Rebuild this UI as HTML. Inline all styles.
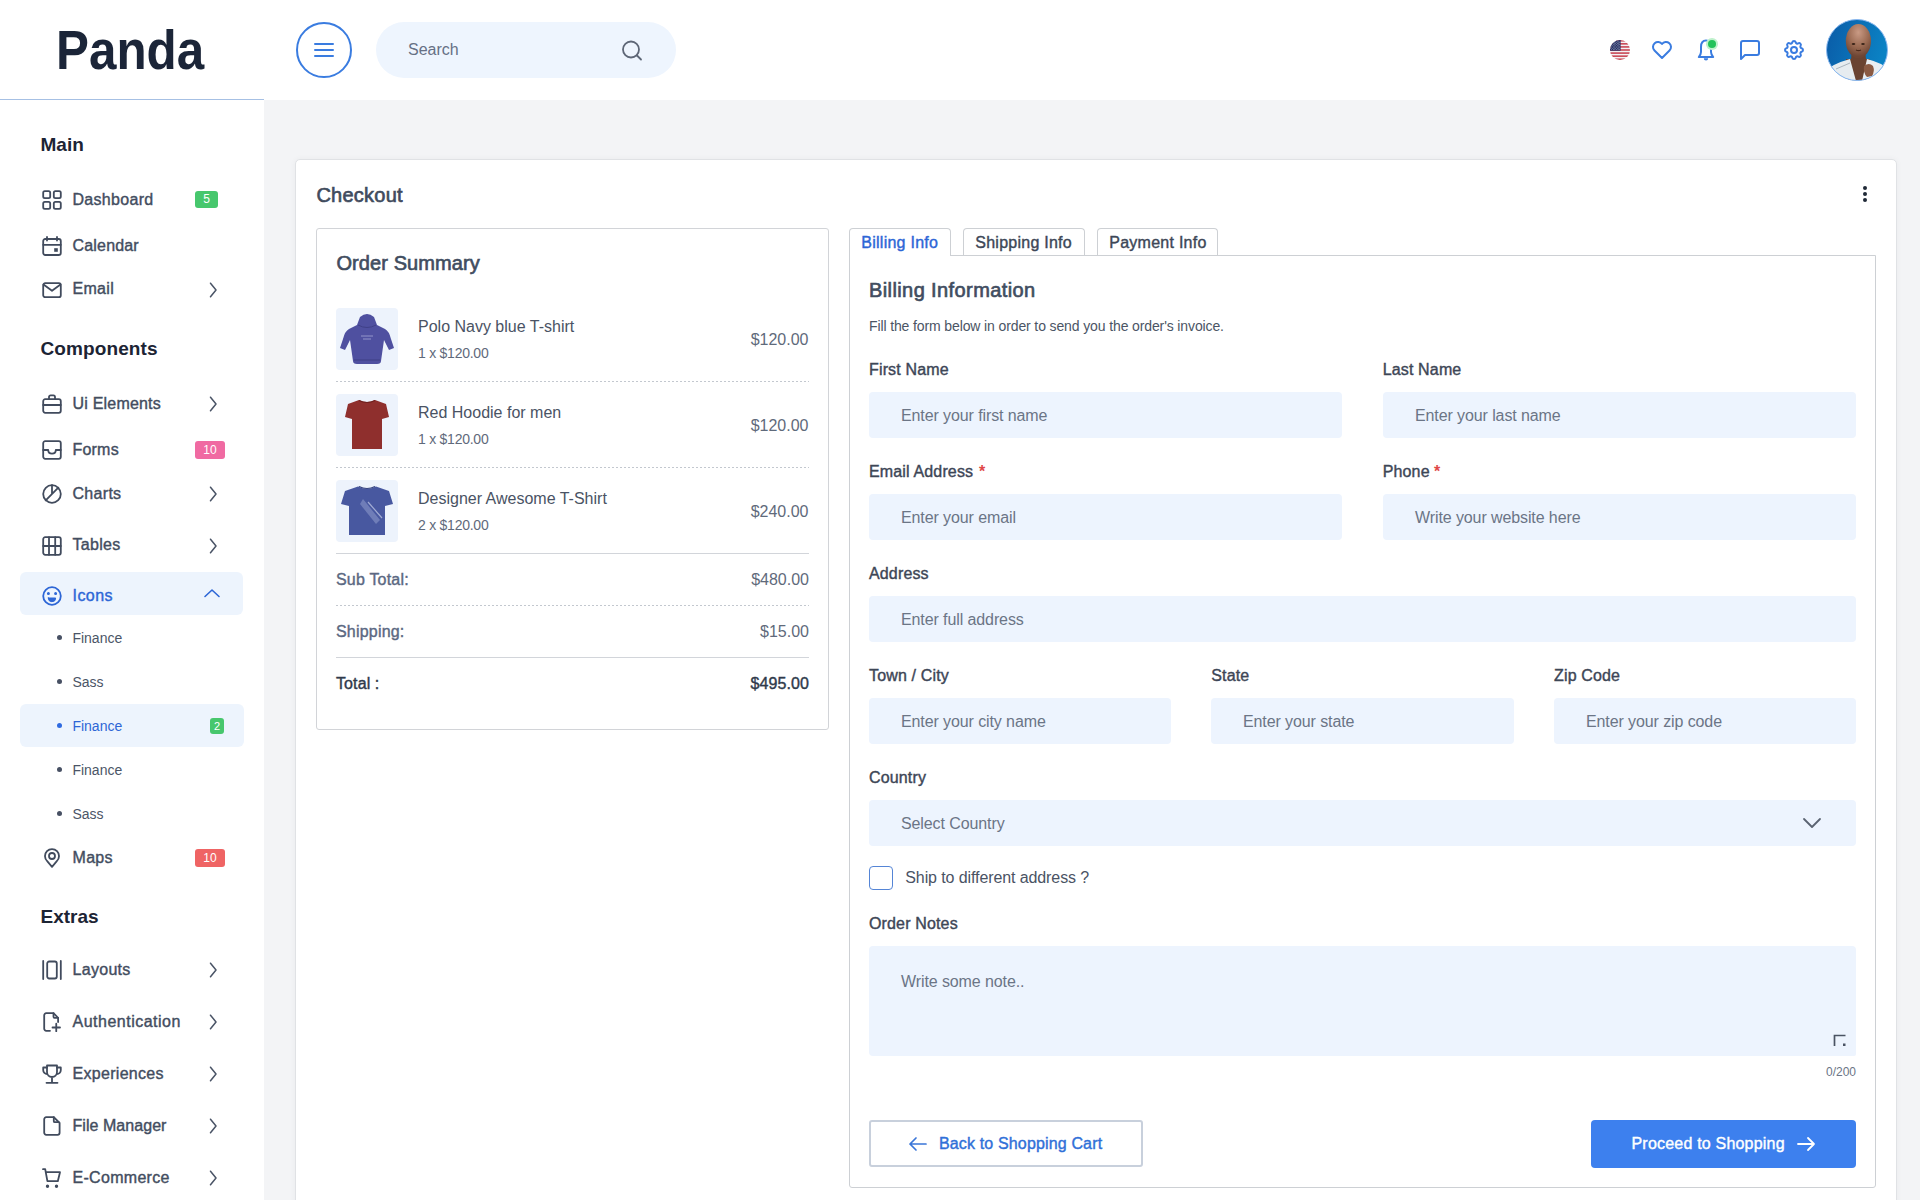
<!DOCTYPE html>
<html><head><meta charset="utf-8"><title>Checkout</title>
<style>
html,body{margin:0;padding:0;}
body{width:1920px;height:1200px;position:relative;overflow:hidden;background:#f3f4f6;font-family:"Liberation Sans",sans-serif;}
.t{position:absolute;white-space:nowrap;}
</style></head><body>

<div style="position:absolute;left:0px;top:0px;width:1920px;height:100px;background:#ffffff;"></div>
<div style="position:absolute;left:0px;top:99px;width:264px;height:1px;background:#a6c0e4;"></div>
<div class="t" style="left:55.6px;top:22.00px;font-size:56px;line-height:56px;font-weight:700;color:#1b2538;transform:scaleX(0.882);transform-origin:left top;">Panda</div>
<div style="position:absolute;left:296px;top:22px;width:56px;height:56px;box-sizing:border-box;border:2px solid #3a7ce0;border-radius:50%;"></div>
<svg style="position:absolute;left:314px;top:41px;" width="20" height="18" viewBox="0 0 20 18" fill="none"><path d="M1 3h18M1 9h18M1 15h18" stroke="#3a7ce0" stroke-width="2" stroke-linecap="round"/></svg>
<div style="position:absolute;left:376px;top:22px;width:300px;height:56px;background:#eef5fe;border-radius:28px;"></div>
<div class="t" style="left:408px;top:42.00px;font-size:16px;line-height:16px;font-weight:400;color:#667085;">Search</div>
<svg style="position:absolute;left:619px;top:38px;" width="26" height="26" viewBox="0 0 26 26" fill="none"><circle cx="12" cy="11.5" r="8" stroke="#5d6676" stroke-width="1.8"/><path d="M18 17.5l4 4" stroke="#5d6676" stroke-width="1.8" stroke-linecap="round"/></svg>
<div style="position:absolute;left:0px;top:100px;width:264px;height:1100px;background:#ffffff;"></div>
<svg style="position:absolute;left:1610px;top:40px" width="20" height="20" viewBox="0 0 20 20">
<defs><clipPath id="fc"><circle cx="10" cy="10" r="10"/></clipPath></defs>
<g clip-path="url(#fc)">
<rect width="20" height="20" fill="#f2f2f4"/>
<rect y="0.000" width="20" height="1.538" fill="#c8404e"/><rect y="3.077" width="20" height="1.538" fill="#c8404e"/><rect y="6.154" width="20" height="1.538" fill="#c8404e"/><rect y="9.231" width="20" height="1.538" fill="#c8404e"/><rect y="12.308" width="20" height="1.538" fill="#c8404e"/><rect y="15.385" width="20" height="1.538" fill="#c8404e"/><rect y="18.462" width="20" height="1.538" fill="#c8404e"/>
<rect width="10.6" height="10.7" fill="#232d62"/>
<g fill="#e8eaf2"><circle cx="0.90" cy="1.00" r=".38"/><circle cx="2.50" cy="1.00" r=".38"/><circle cx="4.10" cy="1.00" r=".38"/><circle cx="5.70" cy="1.00" r=".38"/><circle cx="7.30" cy="1.00" r=".38"/><circle cx="8.90" cy="1.00" r=".38"/><circle cx="1.70" cy="2.20" r=".38"/><circle cx="3.30" cy="2.20" r=".38"/><circle cx="4.90" cy="2.20" r=".38"/><circle cx="6.50" cy="2.20" r=".38"/><circle cx="8.10" cy="2.20" r=".38"/><circle cx="9.70" cy="2.20" r=".38"/><circle cx="0.90" cy="3.40" r=".38"/><circle cx="2.50" cy="3.40" r=".38"/><circle cx="4.10" cy="3.40" r=".38"/><circle cx="5.70" cy="3.40" r=".38"/><circle cx="7.30" cy="3.40" r=".38"/><circle cx="8.90" cy="3.40" r=".38"/><circle cx="1.70" cy="4.60" r=".38"/><circle cx="3.30" cy="4.60" r=".38"/><circle cx="4.90" cy="4.60" r=".38"/><circle cx="6.50" cy="4.60" r=".38"/><circle cx="8.10" cy="4.60" r=".38"/><circle cx="9.70" cy="4.60" r=".38"/><circle cx="0.90" cy="5.80" r=".38"/><circle cx="2.50" cy="5.80" r=".38"/><circle cx="4.10" cy="5.80" r=".38"/><circle cx="5.70" cy="5.80" r=".38"/><circle cx="7.30" cy="5.80" r=".38"/><circle cx="8.90" cy="5.80" r=".38"/><circle cx="1.70" cy="7.00" r=".38"/><circle cx="3.30" cy="7.00" r=".38"/><circle cx="4.90" cy="7.00" r=".38"/><circle cx="6.50" cy="7.00" r=".38"/><circle cx="8.10" cy="7.00" r=".38"/><circle cx="9.70" cy="7.00" r=".38"/><circle cx="0.90" cy="8.20" r=".38"/><circle cx="2.50" cy="8.20" r=".38"/><circle cx="4.10" cy="8.20" r=".38"/><circle cx="5.70" cy="8.20" r=".38"/><circle cx="7.30" cy="8.20" r=".38"/><circle cx="8.90" cy="8.20" r=".38"/><circle cx="1.70" cy="9.40" r=".38"/><circle cx="3.30" cy="9.40" r=".38"/><circle cx="4.90" cy="9.40" r=".38"/><circle cx="6.50" cy="9.40" r=".38"/><circle cx="8.10" cy="9.40" r=".38"/><circle cx="9.70" cy="9.40" r=".38"/></g>
</g></svg>
<svg style="position:absolute;left:1650px;top:38px;" width="24" height="24" viewBox="0 0 24 24" fill="none"><path d="M19.5 12.572L12 20l-7.5-7.428A5 5 0 1 1 12 6.006a5 5 0 1 1 7.5 6.572" stroke="#3a7ce0" stroke-width="2" stroke-linecap="round" stroke-linejoin="round"/></svg>
<svg style="position:absolute;left:1696px;top:38px" width="20" height="24" viewBox="0 0 20 24" fill="none"><path d="M10 2.5C6.6 2.5 5 5.2 5 9v5q0 2.2-2.2 5h14.4q-2.2-2.8-2.2-5V9c0-3.8-1.6-6.5-5-6.5z" stroke="#3a7ce0" stroke-width="2" stroke-linejoin="round"/><path d="M7.8 20.2a2.2 2.2 0 0 0 4.4 0z" fill="#3a7ce0"/></svg>
<div style="position:absolute;left:1706.2px;top:38.2px;width:11.5px;height:11.5px;background:#bff1cc;border-radius:50%;"></div>
<div style="position:absolute;left:1708px;top:40px;width:8px;height:8px;background:#22c25a;border-radius:50%;"></div>
<svg style="position:absolute;left:1738px;top:38px;" width="24" height="24" viewBox="0 0 24 24" fill="none"><path d="M3 21V5a2 2 0 0 1 2-2h14a2 2 0 0 1 2 2v10a2 2 0 0 1-2 2H7l-4 4z" stroke="#3a7ce0" stroke-width="2" stroke-linecap="round" stroke-linejoin="round"/></svg>
<svg style="position:absolute;left:1782px;top:38px;" width="24" height="24" viewBox="0 0 24 24" fill="none"><path d="M10.325 4.317c.426-1.756 2.924-1.756 3.35 0a1.724 1.724 0 0 0 2.573 1.066c1.543-.94 3.31.826 2.37 2.37a1.724 1.724 0 0 0 1.065 2.572c1.756.426 1.756 2.924 0 3.35a1.724 1.724 0 0 0-1.066 2.573c.94 1.543-.826 3.31-2.37 2.37a1.724 1.724 0 0 0-2.572 1.065c-.426 1.756-2.924 1.756-3.35 0a1.724 1.724 0 0 0-2.573-1.066c-1.543.94-3.31-.826-2.37-2.37a1.724 1.724 0 0 0-1.065-2.572c-1.756-.426-1.756-2.924 0-3.35a1.724 1.724 0 0 0 1.066-2.573c-.94-1.543.826-3.31 2.37-2.37c1 .608 2.296.07 2.572-1.065z" stroke="#3a7ce0" stroke-width="2" stroke-linecap="round" stroke-linejoin="round"/><circle cx="12" cy="12" r="3" stroke="#3a7ce0" stroke-width="2"/></svg>
<svg style="position:absolute;left:1826px;top:19px" width="62" height="62" viewBox="0 0 62 62">
<defs><clipPath id="ac"><circle cx="31" cy="31" r="30.5"/></clipPath>
<linearGradient id="abg" x1="0" y1="0" x2="1" y2="0.3"><stop offset="0" stop-color="#0a5aa6"/><stop offset="1" stop-color="#0b82c4"/></linearGradient>
<radialGradient id="skin" cx="0.5" cy="0.25" r="0.7"><stop offset="0" stop-color="#c99a84"/><stop offset="0.6" stop-color="#9a6a52"/><stop offset="1" stop-color="#6e4634"/></radialGradient></defs>
<g clip-path="url(#ac)">
<rect width="62" height="62" fill="url(#abg)"/>
<path d="M26 32 L39 32 L40 40 L44 40 L42 62 L22 62 L20 40 L25 40 Z" fill="#6a4331"/>
<path d="M0 62 L0 52 Q6 45 24 40 L30 62 Z" fill="#e6ecf0"/>
<path d="M62 62 L62 50 Q56 44 41 40 L36 62 Z" fill="#e9eef2"/>
<path d="M10 50 L24 44" stroke="#9aa6b0" stroke-width="0.8"/>
<ellipse cx="32.4" cy="22" rx="12.6" ry="17" fill="url(#skin)"/>
<path d="M38 47 q5 -4 9 0 q2 5 -1 10 l-5 1 q-4 -4 -3 -11z" fill="#8a5a43"/>
<ellipse cx="27.5" cy="25" rx="1.8" ry="0.9" fill="#3a2418"/><ellipse cx="37" cy="25" rx="1.8" ry="0.9" fill="#3a2418"/>
<path d="M30 31 q2.5 1.2 5 0" stroke="#4a2a1c" stroke-width="1.2" fill="none"/>
</g>
<circle cx="31" cy="31" r="30.5" fill="none" stroke="#8ab8f0" stroke-width="1"/>
</svg>
<div class="t" style="left:40.5px;top:135.00px;font-size:19px;line-height:19px;font-weight:700;color:#1c2434;">Main</div>
<div class="t" style="left:40.5px;top:339.00px;font-size:19px;line-height:19px;font-weight:700;color:#1c2434;letter-spacing:0.1px;">Components</div>
<div class="t" style="left:40.5px;top:907.00px;font-size:19px;line-height:19px;font-weight:700;color:#1c2434;">Extras</div>
<svg style="position:absolute;left:42px;top:190px" width="20" height="20" viewBox="0 0 20 20" fill="none" stroke="#414b5d" stroke-width="1.8" stroke-linecap="round" stroke-linejoin="round"><rect x="1.2" y="1.2" width="7" height="7" rx="1.6"/><rect x="11.8" y="1.2" width="7" height="7" rx="1.6"/><rect x="1.2" y="11.8" width="7" height="7" rx="1.6"/><rect x="11.8" y="11.8" width="7" height="7" rx="1.6"/></svg>
<div class="t" style="left:72.5px;top:192.00px;font-size:16px;line-height:16px;font-weight:400;color:#434d60;letter-spacing:0.3px;-webkit-text-stroke:0.4px #434d60;">Dashboard</div>
<div style="position:absolute;left:195px;top:191px;width:23px;height:17px;background:#47c76d;border-radius:3px;color:#fff;font-size:12px;line-height:17px;text-align:center;">5</div>
<svg style="position:absolute;left:42px;top:236px" width="20" height="20" viewBox="0 0 20 20" fill="none" stroke="#414b5d" stroke-width="1.8" stroke-linecap="round" stroke-linejoin="round"><rect x="1.2" y="3" width="17.6" height="16" rx="2"/><path d="M1.2 8.8h17.6M5 1v3.5M15 1v3.5"/><rect x="12.2" y="12.2" width="3.6" height="3.6" fill="#414b5d" stroke="none"/></svg>
<div class="t" style="left:72.5px;top:238.00px;font-size:16px;line-height:16px;font-weight:400;color:#434d60;letter-spacing:0.18px;-webkit-text-stroke:0.4px #434d60;">Calendar</div>
<svg style="position:absolute;left:42px;top:280px" width="20" height="20" viewBox="0 0 20 20" fill="none" stroke="#414b5d" stroke-width="1.8" stroke-linecap="round" stroke-linejoin="round"><rect x="1.2" y="3.2" width="17.6" height="14" rx="2"/><path d="M1.5 4.5l8.5 6.3 8.5-6.3"/></svg>
<div class="t" style="left:72.5px;top:281.00px;font-size:16px;line-height:16px;font-weight:400;color:#434d60;letter-spacing:0.3px;-webkit-text-stroke:0.4px #434d60;">Email</div>
<svg style="position:absolute;left:209px;top:282px" width="10" height="16" viewBox="0 0 10 16" fill="none"><path d="M1.5 1.2l5.5 6.8-5.5 6.8" stroke="#4a5466" stroke-width="1.5" stroke-linecap="round" stroke-linejoin="round"/></svg>
<svg style="position:absolute;left:42px;top:394px" width="20" height="20" viewBox="0 0 20 20" fill="none" stroke="#414b5d" stroke-width="1.8" stroke-linecap="round" stroke-linejoin="round"><rect x="1.2" y="5.2" width="17.6" height="13.6" rx="2"/><path d="M7 5.2V3a1.6 1.6 0 0 1 1.6-1.6h2.8A1.6 1.6 0 0 1 13 3v2.2M1.2 11h17.6"/></svg>
<div class="t" style="left:72.5px;top:396.00px;font-size:16px;line-height:16px;font-weight:400;color:#434d60;letter-spacing:0.2px;-webkit-text-stroke:0.4px #434d60;">Ui Elements</div>
<svg style="position:absolute;left:209px;top:396px" width="10" height="16" viewBox="0 0 10 16" fill="none"><path d="M1.5 1.2l5.5 6.8-5.5 6.8" stroke="#4a5466" stroke-width="1.5" stroke-linecap="round" stroke-linejoin="round"/></svg>
<svg style="position:absolute;left:42px;top:440px" width="20" height="20" viewBox="0 0 20 20" fill="none" stroke="#414b5d" stroke-width="1.8" stroke-linecap="round" stroke-linejoin="round"><rect x="1.2" y="1.2" width="17.6" height="17.6" rx="2"/><path d="M1.2 10h5c0 2.5 1.2 3.6 3.8 3.6s3.8-1.1 3.8-3.6h5"/></svg>
<div class="t" style="left:72.5px;top:442.00px;font-size:16px;line-height:16px;font-weight:400;color:#434d60;letter-spacing:0.2px;-webkit-text-stroke:0.4px #434d60;">Forms</div>
<div style="position:absolute;left:195px;top:441px;width:30px;height:18px;background:#f06aa2;border-radius:3px;color:#fff;font-size:12px;line-height:18px;text-align:center;">10</div>
<svg style="position:absolute;left:42px;top:484px" width="20" height="20" viewBox="0 0 20 20" fill="none" stroke="#414b5d" stroke-width="1.8" stroke-linecap="round" stroke-linejoin="round"><circle cx="10" cy="10" r="8.8"/><path d="M10 1.2V10M16.3 3.7L3.7 16.3"/></svg>
<div class="t" style="left:72.5px;top:486.00px;font-size:16px;line-height:16px;font-weight:400;color:#434d60;letter-spacing:0.3px;-webkit-text-stroke:0.4px #434d60;">Charts</div>
<svg style="position:absolute;left:209px;top:486px" width="10" height="16" viewBox="0 0 10 16" fill="none"><path d="M1.5 1.2l5.5 6.8-5.5 6.8" stroke="#4a5466" stroke-width="1.5" stroke-linecap="round" stroke-linejoin="round"/></svg>
<svg style="position:absolute;left:209px;top:537.5px" width="10" height="16" viewBox="0 0 10 16" fill="none"><path d="M1.5 1.2l5.5 6.8-5.5 6.8" stroke="#4a5466" stroke-width="1.5" stroke-linecap="round" stroke-linejoin="round"/></svg>
<svg style="position:absolute;left:42px;top:535.5px" width="20" height="20" viewBox="0 0 20 20" fill="none" stroke="#414b5d" stroke-width="1.8" stroke-linecap="round" stroke-linejoin="round"><rect x="1.2" y="1.2" width="17.6" height="17.6" rx="2"/><path d="M7 1.2v17.6M13.2 1.2v17.6M1.2 10h17.6"/></svg>
<div class="t" style="left:72.5px;top:537.00px;font-size:16px;line-height:16px;font-weight:400;color:#434d60;letter-spacing:0.3px;-webkit-text-stroke:0.4px #434d60;">Tables</div>
<div style="position:absolute;left:20px;top:572px;width:223px;height:43px;background:#edf4fd;border-radius:6px;"></div>
<svg style="position:absolute;left:42px;top:586px" width="20" height="20" viewBox="0 0 20 20" fill="none" stroke="#2d66d6" stroke-width="1.8" stroke-linecap="round" stroke-linejoin="round"><circle cx="10" cy="10" r="8.8"/><circle cx="6.4" cy="7.4" r="0.6" fill="#2d66d6"/><circle cx="13.6" cy="7.4" r="0.6" fill="#2d66d6"/><path d="M6.3 12h7.4a3.7 3.7 0 0 1-7.4 0z" fill="#2d66d6" stroke-width="1"/></svg>
<div class="t" style="left:72.5px;top:588.00px;font-size:16px;line-height:16px;font-weight:400;color:#2d66d6;letter-spacing:0.45px;-webkit-text-stroke:0.4px #2d66d6;">Icons</div>
<svg style="position:absolute;left:203px;top:587px" width="18" height="12" viewBox="0 0 18 12" fill="none"><path d="M2 9.5l7-6.5 7 6.5" stroke="#2d66d6" stroke-width="1.6" stroke-linecap="round" stroke-linejoin="round"/></svg>
<div style="position:absolute;left:57.3px;top:635.0px;width:5px;height:5px;background:#475063;border-radius:50%;"></div>
<div class="t" style="left:72.4px;top:631.00px;font-size:14px;line-height:14px;font-weight:400;color:#4b5567;">Finance</div>
<div style="position:absolute;left:57.3px;top:678.7px;width:5px;height:5px;background:#475063;border-radius:50%;"></div>
<div class="t" style="left:72.4px;top:675.00px;font-size:14px;line-height:14px;font-weight:400;color:#4b5567;">Sass</div>
<div style="position:absolute;left:20px;top:704px;width:224px;height:43px;background:#edf4fd;border-radius:6px;"></div>
<div style="position:absolute;left:57.3px;top:722.7px;width:5px;height:5px;background:#2f6ae0;border-radius:50%;"></div>
<div class="t" style="left:72.4px;top:719.00px;font-size:14px;line-height:14px;font-weight:400;color:#2d66d6;">Finance</div>
<div style="position:absolute;left:210px;top:718px;width:14px;height:16px;background:#47c76d;border-radius:3px;color:#fff;font-size:11px;line-height:16px;text-align:center;">2</div>
<div style="position:absolute;left:57.3px;top:766.7px;width:5px;height:5px;background:#475063;border-radius:50%;"></div>
<div class="t" style="left:72.4px;top:763.00px;font-size:14px;line-height:14px;font-weight:400;color:#4b5567;">Finance</div>
<div style="position:absolute;left:57.3px;top:810.7px;width:5px;height:5px;background:#475063;border-radius:50%;"></div>
<div class="t" style="left:72.4px;top:807.00px;font-size:14px;line-height:14px;font-weight:400;color:#4b5567;">Sass</div>
<svg style="position:absolute;left:42px;top:847.5px" width="20" height="20" viewBox="0 0 20 20" fill="none" stroke="#414b5d" stroke-width="1.8" stroke-linecap="round" stroke-linejoin="round"><circle cx="10" cy="8" r="3"/><path d="M14.8 13.2L10 18.8l-4.8-5.6a7 7 0 1 1 9.6 0z"/></svg>
<div class="t" style="left:72.5px;top:850.00px;font-size:16px;line-height:16px;font-weight:400;color:#434d60;letter-spacing:0.3px;-webkit-text-stroke:0.4px #434d60;">Maps</div>
<div style="position:absolute;left:195px;top:849px;width:30px;height:18px;background:#ef6464;border-radius:3px;color:#fff;font-size:12px;line-height:18px;text-align:center;">10</div>
<svg style="position:absolute;left:42px;top:960px" width="20" height="20" viewBox="0 0 20 20" fill="none" stroke="#414b5d" stroke-width="1.8" stroke-linecap="round" stroke-linejoin="round"><path d="M1.2 1v18M18.8 1v18"/><rect x="5.2" y="1.5" width="9.6" height="17" rx="2"/></svg>
<div class="t" style="left:72.5px;top:962.00px;font-size:16px;line-height:16px;font-weight:400;color:#434d60;letter-spacing:0.3px;-webkit-text-stroke:0.4px #434d60;">Layouts</div>
<svg style="position:absolute;left:209px;top:962px" width="10" height="16" viewBox="0 0 10 16" fill="none"><path d="M1.5 1.2l5.5 6.8-5.5 6.8" stroke="#4a5466" stroke-width="1.5" stroke-linecap="round" stroke-linejoin="round"/></svg>
<svg style="position:absolute;left:42px;top:1012px" width="20" height="20" viewBox="0 0 20 20" fill="none" stroke="#414b5d" stroke-width="1.8" stroke-linecap="round" stroke-linejoin="round"><path d="M11.5 1.2v3.6a1 1 0 0 0 1 1h3.6"/><path d="M8 18.8H4.2a2 2 0 0 1-2-2V3.2a2 2 0 0 1 2-2h7.3l4.6 4.6V10"/><path d="M10.5 15.5h7.5M14.25 11.75v7.5"/></svg>
<div class="t" style="left:72.5px;top:1014.00px;font-size:16px;line-height:16px;font-weight:400;color:#434d60;letter-spacing:0.5px;-webkit-text-stroke:0.4px #434d60;">Authentication</div>
<svg style="position:absolute;left:209px;top:1014px" width="10" height="16" viewBox="0 0 10 16" fill="none"><path d="M1.5 1.2l5.5 6.8-5.5 6.8" stroke="#4a5466" stroke-width="1.5" stroke-linecap="round" stroke-linejoin="round"/></svg>
<svg style="position:absolute;left:42px;top:1064px" width="20" height="20" viewBox="0 0 20 20" fill="none" stroke="#414b5d" stroke-width="1.8" stroke-linecap="round" stroke-linejoin="round"><path d="M4.5 18.8h11M10 13.5v5.3M5 1.5h10M15 1.5v6.5a5 5 0 0 1-10 0V1.5"/><path d="M5 3.5H1.2v2.5a4 4 0 0 0 4 4M15 3.5h3.8v2.5a4 4 0 0 1-4 4"/></svg>
<div class="t" style="left:72.5px;top:1066.00px;font-size:16px;line-height:16px;font-weight:400;color:#434d60;letter-spacing:0.3px;-webkit-text-stroke:0.4px #434d60;">Experiences</div>
<svg style="position:absolute;left:209px;top:1066px" width="10" height="16" viewBox="0 0 10 16" fill="none"><path d="M1.5 1.2l5.5 6.8-5.5 6.8" stroke="#4a5466" stroke-width="1.5" stroke-linecap="round" stroke-linejoin="round"/></svg>
<svg style="position:absolute;left:42px;top:1116px" width="20" height="20" viewBox="0 0 20 20" fill="none" stroke="#414b5d" stroke-width="1.8" stroke-linecap="round" stroke-linejoin="round"><path d="M11.8 1.2v4a1 1 0 0 0 1 1h4"/><path d="M15.8 18.8H4.2a2 2 0 0 1-2-2V3.2a2 2 0 0 1 2-2h7.6l5.8 5.8v9.8a2 2 0 0 1-2 2z"/></svg>
<div class="t" style="left:72.5px;top:1118.00px;font-size:16px;line-height:16px;font-weight:400;color:#434d60;letter-spacing:0.05px;-webkit-text-stroke:0.4px #434d60;">File Manager</div>
<svg style="position:absolute;left:209px;top:1118px" width="10" height="16" viewBox="0 0 10 16" fill="none"><path d="M1.5 1.2l5.5 6.8-5.5 6.8" stroke="#4a5466" stroke-width="1.5" stroke-linecap="round" stroke-linejoin="round"/></svg>
<svg style="position:absolute;left:42px;top:1168px" width="20" height="20" viewBox="0 0 20 20" fill="none" stroke="#414b5d" stroke-width="1.8" stroke-linecap="round" stroke-linejoin="round"><circle cx="5.5" cy="18.3" r=".8" fill="#414b5d"/><circle cx="14.5" cy="18.3" r=".8" fill="#414b5d"/><path d="M1 1.2h2.2l2.2 12h10.4l2.2-9H4.2"/></svg>
<div class="t" style="left:72.5px;top:1170.00px;font-size:16px;line-height:16px;font-weight:400;color:#434d60;letter-spacing:0.3px;-webkit-text-stroke:0.4px #434d60;">E-Commerce</div>
<svg style="position:absolute;left:209px;top:1170px" width="10" height="16" viewBox="0 0 10 16" fill="none"><path d="M1.5 1.2l5.5 6.8-5.5 6.8" stroke="#4a5466" stroke-width="1.5" stroke-linecap="round" stroke-linejoin="round"/></svg>
<div style="position:absolute;left:295px;top:159px;width:1601.5px;height:1060px;box-sizing:border-box;background:#fff;border:1px solid #e0e2e5;border-radius:5px;box-shadow:0 0 6px rgba(0,0,0,0.045);"></div>
<div class="t" style="left:316.4px;top:185.00px;font-size:20px;line-height:20px;font-weight:400;color:#3f4b5d;letter-spacing:0.25px;-webkit-text-stroke:0.65px #3f4b5d;">Checkout</div>
<div style="position:absolute;left:1863px;top:186px;width:4px;height:4px;background:#1f2937;border-radius:50%;"></div>
<div style="position:absolute;left:1863px;top:192px;width:4px;height:4px;background:#1f2937;border-radius:50%;"></div>
<div style="position:absolute;left:1863px;top:198px;width:4px;height:4px;background:#1f2937;border-radius:50%;"></div>
<div style="position:absolute;left:316px;top:228px;width:513px;height:502px;box-sizing:border-box;border:1px solid #d2d4d8;border-radius:3px;background:#fff;"></div>
<div class="t" style="left:336.4px;top:253.00px;font-size:20px;line-height:20px;font-weight:400;color:#414d60;letter-spacing:0.1px;-webkit-text-stroke:0.65px #414d60;">Order Summary</div>
<svg style="position:absolute;left:336px;top:308px" width="62" height="62" viewBox="0 0 62 62"><rect width="62" height="62" rx="4" fill="#edf3fc"/><path d="M24 9 Q31 3 38 9 L41 17 L49 21 Q53 23 55 31 L58 40 L53 42 L48 32 L45 53 Q45 56 41 56 L21 56 Q17 56 17 53 L14 32 L9 42 L4 40 L7 31 Q9 23 13 21 L21 17 Z" fill="#4f50a0"/><path d="M22 17 Q31 22 40 17" stroke="#3f4088" stroke-width="1" fill="none"/><path d="M25 28 h12M27 31 h8" stroke="#9c9dd0" stroke-width=".9"/><path d="M18 52 h26" stroke="#43448e" stroke-width="1.5"/></svg>
<div class="t" style="left:418px;top:319.00px;font-size:16px;line-height:16px;font-weight:400;color:#4a5364;">Polo Navy blue T-shirt</div>
<div class="t" style="left:418px;top:346.00px;font-size:14px;line-height:14px;font-weight:400;color:#5f6a7b;letter-spacing:-0.25px;">1 x $120.00</div>
<div class="t" style="right:1111.5px;top:332.00px;font-size:16px;line-height:16px;font-weight:400;color:#5f6a7b;">$120.00</div>
<div style="position:absolute;left:336px;top:381px;width:473px;height:1px;height:1px;background-image:linear-gradient(to right,#c3c8cf 50%,transparent 50%);background-size:4px 1px;"></div>
<svg style="position:absolute;left:336px;top:394px" width="62" height="62" viewBox="0 0 62 62"><rect width="62" height="62" rx="4" fill="#edf3fc"/><path d="M23 6 Q31 10 39 6 L50 10 L53 23 L46 25 L46 55 L16 55 L16 25 L9 23 L12 10 Z" fill="#8f2f2d"/><path d="M23 6.5 Q31 10.5 39 6.5" stroke="#6e201e" stroke-width="1.2" fill="none"/></svg>
<div class="t" style="left:418px;top:405.00px;font-size:16px;line-height:16px;font-weight:400;color:#4a5364;">Red Hoodie for men</div>
<div class="t" style="left:418px;top:432.00px;font-size:14px;line-height:14px;font-weight:400;color:#5f6a7b;letter-spacing:-0.25px;">1 x $120.00</div>
<div class="t" style="right:1111.5px;top:418.00px;font-size:16px;line-height:16px;font-weight:400;color:#5f6a7b;">$120.00</div>
<div style="position:absolute;left:336px;top:467px;width:473px;height:1px;height:1px;background-image:linear-gradient(to right,#c3c8cf 50%,transparent 50%);background-size:4px 1px;"></div>
<svg style="position:absolute;left:336px;top:480px" width="62" height="62" viewBox="0 0 62 62"><rect width="62" height="62" rx="4" fill="#edf3fc"/><path d="M22 6.5 Q31 11 40 6.5 L53 11 L57 24 L49 26 L49 55 L13 55 L13 26 L5 24 L9 11 Z" fill="#4858a0"/><path d="M23 6.5 Q31 10.5 39 6.5" stroke="#34427e" stroke-width="1.2" fill="none"/><path d="M27 19 L44 40 L40 44 L24 24 Z" fill="#8f9ccc" opacity=".55"/><path d="M32 22 L46 38" stroke="#c8d0ea" stroke-width="1.2" opacity=".7"/></svg>
<div class="t" style="left:418px;top:491.00px;font-size:16px;line-height:16px;font-weight:400;color:#4a5364;">Designer Awesome T-Shirt</div>
<div class="t" style="left:418px;top:518.00px;font-size:14px;line-height:14px;font-weight:400;color:#5f6a7b;letter-spacing:-0.25px;">2 x $120.00</div>
<div class="t" style="right:1111.5px;top:504.00px;font-size:16px;line-height:16px;font-weight:400;color:#5f6a7b;">$240.00</div>
<div style="position:absolute;left:336px;top:553px;width:473px;height:1px;background:#d2d5da;"></div>
<div class="t" style="left:336px;top:572.00px;font-size:16px;line-height:16px;font-weight:400;color:#5b6882;letter-spacing:0.2px;-webkit-text-stroke:0.4px #5b6882;">Sub Total:</div>
<div class="t" style="right:1111px;top:572.00px;font-size:16px;line-height:16px;font-weight:400;color:#5f6a7b;">$480.00</div>
<div style="position:absolute;left:336px;top:605px;width:473px;height:1px;height:1px;background-image:linear-gradient(to right,#c3c8cf 50%,transparent 50%);background-size:4px 1px;"></div>
<div class="t" style="left:336px;top:624.00px;font-size:16px;line-height:16px;font-weight:400;color:#5b6882;letter-spacing:0.2px;-webkit-text-stroke:0.4px #5b6882;">Shipping:</div>
<div class="t" style="right:1111px;top:624.00px;font-size:16px;line-height:16px;font-weight:400;color:#5f6a7b;">$15.00</div>
<div style="position:absolute;left:336px;top:657px;width:473px;height:1px;background:#d2d5da;"></div>
<div class="t" style="left:336px;top:676.00px;font-size:16px;line-height:16px;font-weight:400;color:#2f3a4b;letter-spacing:0.1px;-webkit-text-stroke:0.4px #2f3a4b;">Total :</div>
<div class="t" style="right:1111px;top:676.00px;font-size:16px;line-height:16px;font-weight:400;color:#2f3a4b;letter-spacing:0.1px;-webkit-text-stroke:0.4px #2f3a4b;">$495.00</div>
<div style="position:absolute;left:849px;top:255px;width:1027px;height:933px;box-sizing:border-box;border:1px solid #cdd0d4;border-radius:0 0 3px 3px;background:#fff;"></div>
<div style="position:absolute;left:849px;top:228px;width:102px;height:28px;box-sizing:border-box;border:1px solid #cdd0d4;border-bottom:none;border-radius:4px 4px 0 0;background:#fff;"></div>
<div class="t" style="left:861.3px;top:235.00px;font-size:16px;line-height:16px;font-weight:400;color:#2d66d6;letter-spacing:0.25px;-webkit-text-stroke:0.4px #2d66d6;">Billing Info</div>
<div style="position:absolute;left:963px;top:228px;width:122px;height:27px;box-sizing:border-box;border:1px solid #cdd0d4;border-bottom:none;border-radius:4px 4px 0 0;background:#fff;"></div>
<div class="t" style="left:975.3px;top:235.00px;font-size:16px;line-height:16px;font-weight:400;color:#3d4757;letter-spacing:0.25px;-webkit-text-stroke:0.4px #3d4757;">Shipping Info</div>
<div style="position:absolute;left:1097px;top:228px;width:121px;height:27px;box-sizing:border-box;border:1px solid #cdd0d4;border-bottom:none;border-radius:4px 4px 0 0;background:#fff;"></div>
<div class="t" style="left:1109.3px;top:235.00px;font-size:16px;line-height:16px;font-weight:400;color:#3d4757;letter-spacing:0.25px;-webkit-text-stroke:0.4px #3d4757;">Payment Info</div>
<div class="t" style="left:869px;top:280.00px;font-size:20px;line-height:20px;font-weight:400;color:#414d60;letter-spacing:0.4px;-webkit-text-stroke:0.65px #414d60;">Billing Information</div>
<div class="t" style="left:869px;top:319.00px;font-size:14px;line-height:14px;font-weight:400;color:#4b5565;letter-spacing:-0.12px;">Fill the form below in order to send you the order's invoice.</div>
<div class="t" style="left:869px;top:362.00px;font-size:16px;line-height:16px;font-weight:400;color:#3d4656;letter-spacing:0.15px;-webkit-text-stroke:0.4px #3d4656;">First Name</div>
<div class="t" style="left:1382.7px;top:362.00px;font-size:16px;line-height:16px;font-weight:400;color:#3d4656;letter-spacing:0.15px;-webkit-text-stroke:0.4px #3d4656;">Last Name</div>
<div style="position:absolute;left:869px;top:392px;width:473px;height:46px;background:#edf4fe;border-radius:4px;"></div>
<div class="t" style="left:901px;top:408.00px;font-size:16px;line-height:16px;font-weight:400;color:#6b7586;letter-spacing:-0.1px;">Enter your first name</div>
<div style="position:absolute;left:1383px;top:392px;width:473px;height:46px;background:#edf4fe;border-radius:4px;"></div>
<div class="t" style="left:1415px;top:408.00px;font-size:16px;line-height:16px;font-weight:400;color:#6b7586;letter-spacing:-0.1px;">Enter your last name</div>
<div class="t" style="left:869px;top:464.00px;font-size:16px;line-height:16px;font-weight:400;color:#3d4656;letter-spacing:0.15px;-webkit-text-stroke:0.4px #3d4656;">Email Address</div>
<div class="t" style="left:979px;top:464.00px;font-size:16px;line-height:16px;font-weight:700;color:#e04848;">*</div>
<div class="t" style="left:1382.7px;top:464.00px;font-size:16px;line-height:16px;font-weight:400;color:#3d4656;letter-spacing:0.15px;-webkit-text-stroke:0.4px #3d4656;">Phone</div>
<div class="t" style="left:1434px;top:464.00px;font-size:16px;line-height:16px;font-weight:700;color:#e04848;">*</div>
<div style="position:absolute;left:869px;top:494px;width:473px;height:46px;background:#edf4fe;border-radius:4px;"></div>
<div class="t" style="left:901px;top:510.00px;font-size:16px;line-height:16px;font-weight:400;color:#6b7586;letter-spacing:-0.1px;">Enter your email</div>
<div style="position:absolute;left:1383px;top:494px;width:473px;height:46px;background:#edf4fe;border-radius:4px;"></div>
<div class="t" style="left:1415px;top:510.00px;font-size:16px;line-height:16px;font-weight:400;color:#6b7586;letter-spacing:-0.1px;">Write your website here</div>
<div class="t" style="left:869px;top:566.00px;font-size:16px;line-height:16px;font-weight:400;color:#3d4656;letter-spacing:0.15px;-webkit-text-stroke:0.4px #3d4656;">Address</div>
<div style="position:absolute;left:869px;top:596px;width:987px;height:46px;background:#edf4fe;border-radius:4px;"></div>
<div class="t" style="left:901px;top:612.00px;font-size:16px;line-height:16px;font-weight:400;color:#6b7586;letter-spacing:-0.1px;">Enter full address</div>
<div class="t" style="left:869px;top:668.00px;font-size:16px;line-height:16px;font-weight:400;color:#3d4656;letter-spacing:0.15px;-webkit-text-stroke:0.4px #3d4656;">Town / City</div>
<div class="t" style="left:1211.3px;top:668.00px;font-size:16px;line-height:16px;font-weight:400;color:#3d4656;letter-spacing:0.15px;-webkit-text-stroke:0.4px #3d4656;">State</div>
<div class="t" style="left:1554px;top:668.00px;font-size:16px;line-height:16px;font-weight:400;color:#3d4656;letter-spacing:0.15px;-webkit-text-stroke:0.4px #3d4656;">Zip Code</div>
<div style="position:absolute;left:869px;top:698px;width:302px;height:46px;background:#edf4fe;border-radius:4px;"></div>
<div class="t" style="left:901px;top:714.00px;font-size:16px;line-height:16px;font-weight:400;color:#6b7586;letter-spacing:-0.1px;">Enter your city name</div>
<div style="position:absolute;left:1211px;top:698px;width:303px;height:46px;background:#edf4fe;border-radius:4px;"></div>
<div class="t" style="left:1243px;top:714.00px;font-size:16px;line-height:16px;font-weight:400;color:#6b7586;letter-spacing:-0.1px;">Enter your state</div>
<div style="position:absolute;left:1554px;top:698px;width:302px;height:46px;background:#edf4fe;border-radius:4px;"></div>
<div class="t" style="left:1586px;top:714.00px;font-size:16px;line-height:16px;font-weight:400;color:#6b7586;letter-spacing:-0.1px;">Enter your zip code</div>
<div class="t" style="left:869px;top:770.00px;font-size:16px;line-height:16px;font-weight:400;color:#3d4656;letter-spacing:0.15px;-webkit-text-stroke:0.4px #3d4656;">Country</div>
<div style="position:absolute;left:869px;top:800px;width:987px;height:46px;background:#edf4fe;border-radius:4px;"></div>
<div class="t" style="left:901px;top:816.00px;font-size:16px;line-height:16px;font-weight:400;color:#6b7586;letter-spacing:-0.1px;">Select Country</div>
<svg style="position:absolute;left:1800px;top:815px" width="24" height="18" viewBox="0 0 24 18" fill="none"><path d="M4 4l8 8 8-8" stroke="#5a6371" stroke-width="1.8" stroke-linecap="round" stroke-linejoin="round"/></svg>
<div style="position:absolute;left:869px;top:866px;width:24px;height:24px;box-sizing:border-box;border:1.5px solid #5585d6;border-radius:4px;background:#fff;"></div>
<div class="t" style="left:905.3px;top:870.00px;font-size:16px;line-height:16px;font-weight:400;color:#4a5364;letter-spacing:-0.1px;">Ship to different address ?</div>
<div class="t" style="left:869px;top:916.00px;font-size:16px;line-height:16px;font-weight:400;color:#3d4656;letter-spacing:0.15px;-webkit-text-stroke:0.4px #3d4656;">Order Notes</div>
<div style="position:absolute;left:869px;top:946px;width:987px;height:110px;background:#edf4fe;border-radius:4px 4px 2px 4px;"></div>
<div class="t" style="left:901px;top:974.00px;font-size:16px;line-height:16px;font-weight:400;color:#6b7586;letter-spacing:-0.1px;">Write some note..</div>
<svg style="position:absolute;left:1832px;top:1032px" width="16" height="16" viewBox="0 0 16 16" fill="none"><path d="M2.5 14V3.5h11" stroke="#4a5363" stroke-width="1.7"/><rect x="11" y="11.5" width="2.5" height="2.5" fill="#4a5363"/></svg>
<div class="t" style="right:64px;top:1066.00px;font-size:12px;line-height:12px;font-weight:400;color:#6b7586;">0/200</div>
<div style="position:absolute;left:869px;top:1120px;width:274px;height:47px;box-sizing:border-box;border:2px solid #c8d0dc;border-radius:3px;background:#fff;"></div>
<svg style="position:absolute;left:907px;top:1134px" width="22" height="20" viewBox="0 0 22 20" fill="none"><path d="M3 10h16M3 10l6-6M3 10l6 6" stroke="#3a76d8" stroke-width="1.7" stroke-linecap="round" stroke-linejoin="round"/></svg>
<div class="t" style="left:939px;top:1136.00px;font-size:16px;line-height:16px;font-weight:400;color:#3070d8;letter-spacing:0.15px;-webkit-text-stroke:0.4px #3070d8;">Back to Shopping Cart</div>
<div style="position:absolute;left:1591px;top:1120px;width:265px;height:48px;background:#3d80ee;border-radius:4px;"></div>
<div class="t" style="left:1631.5px;top:1136.00px;font-size:16px;line-height:16px;font-weight:400;color:#ffffff;letter-spacing:0.2px;-webkit-text-stroke:0.4px #ffffff;">Proceed to Shopping</div>
<svg style="position:absolute;left:1795px;top:1134px" width="22" height="20" viewBox="0 0 22 20" fill="none"><path d="M3 10h16M19 10l-6-6M19 10l-6 6" stroke="#fff" stroke-width="1.8" stroke-linecap="round" stroke-linejoin="round"/></svg>
</body></html>
